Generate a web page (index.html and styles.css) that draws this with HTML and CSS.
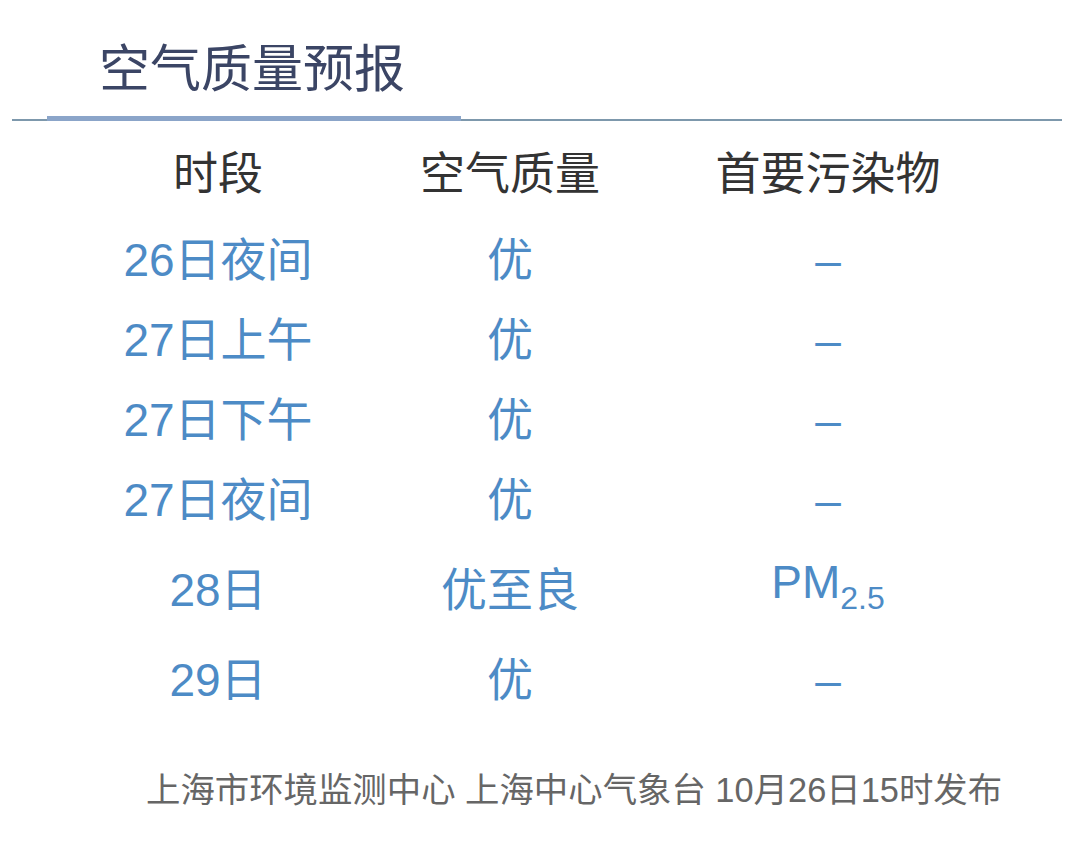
FILE: index.html
```html
<!DOCTYPE html>
<html lang="zh-CN">
<head>
<meta charset="utf-8">
<title>空气质量预报</title>
<link rel="stylesheet" href="styles.css">
</head>
<body>
<div class="page">
  <h1 class="title">空气质量预报</h1>
  <div class="rule">
    <div class="rule-seg"></div>
    <div class="rule-accent"></div>
    <div class="rule-seg rule-rest"></div>
  </div>
  <div class="table">
    <div class="row head">
      <div class="cell">时段</div>
      <div class="cell">空气质量</div>
      <div class="cell">首要污染物</div>
    </div>
    <div class="row">
      <div class="cell">26日夜间</div>
      <div class="cell">优</div>
      <div class="cell">–</div>
    </div>
    <div class="row">
      <div class="cell">27日上午</div>
      <div class="cell">优</div>
      <div class="cell">–</div>
    </div>
    <div class="row">
      <div class="cell">27日下午</div>
      <div class="cell">优</div>
      <div class="cell">–</div>
    </div>
    <div class="row">
      <div class="cell">27日夜间</div>
      <div class="cell">优</div>
      <div class="cell">–</div>
    </div>
    <div class="row tall">
      <div class="cell">28日</div>
      <div class="cell">优至良</div>
      <div class="cell">PM<span class="sub">2.5</span></div>
    </div>
    <div class="row">
      <div class="cell">29日</div>
      <div class="cell">优</div>
      <div class="cell">–</div>
    </div>
  </div>
  <p class="footer">上海市环境监测中心 上海中心气象台 10月26日15时发布</p>
</div>
</body>
</html>
```
FILE: styles.css
```css
html, body {
  margin: 0;
  padding: 0;
  background: #ffffff;
}

.page {
  width: 1080px;
  height: 857px;
  display: flex;
  flex-direction: column;
  font-family: "Liberation Sans", "Noto Sans CJK SC", sans-serif;
}

.title {
  margin: 0;
  padding: 40px 0 0 99px;
  height: 50px;
  line-height: 50px;
  margin-bottom: 26px;
  font-family: "Noto Sans CJK SC", sans-serif;
  font-weight: 400;
  font-size: 51px;
  color: #3b4565;
}

.rule {
  display: flex;
  align-items: flex-end;
  margin-left: 12px;
  width: 1050px;
  height: 5px;
}

.rule-seg {
  width: 35px;
  height: 2px;
  background: #7d98ac;
}

.rule-rest {
  flex: 1;
}

.rule-accent {
  width: 414px;
  height: 5px;
  background: #8ba5c9;
}

.table {
  margin-top: 9px;
  margin-left: 72px;
  display: flex;
  flex-direction: column;
}

.row {
  display: grid;
  grid-template-columns: 292px 292px 344px;
  height: 80px;
  align-items: center;
  font-size: 46px;
  color: #4d8bc6;
}

.row.head {
  height: 90px;
  font-size: 45px;
  color: #333333;
}

.row.tall {
  height: 100px;
}

.cell {
  text-align: center;
  line-height: 50px;
  white-space: nowrap;
}

.sub {
  font-size: 32px;
  vertical-align: -11px;
}

.footer {
  margin: 50px 0 0 0;
  padding-left: 146px;
  line-height: 40px;
  font-size: 34.4px;
  color: #666666;
  white-space: nowrap;
}
```
